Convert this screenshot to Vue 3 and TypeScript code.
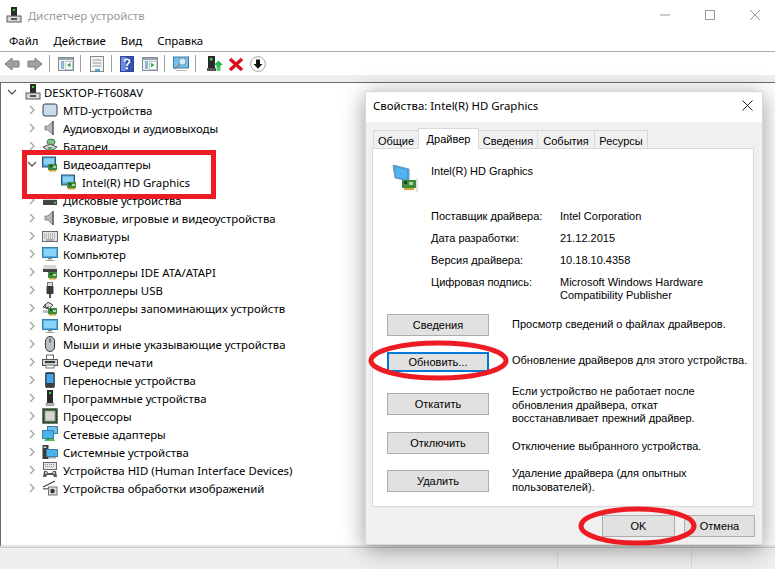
<script setup lang="ts">
interface Row { label: string; icon: string; level: number; open?: boolean }
const rows: Row[] = [
  { label: 'MTD-устройства', icon: 'mtd', level: 1 },
  { label: 'Аудиовходы и аудиовыходы', icon: 'speaker', level: 1 },
  { label: 'Батареи', icon: 'battery', level: 1 },
  { label: 'Видеоадаптеры', icon: 'video', level: 1, open: true },
  { label: 'Intel(R) HD Graphics', icon: 'video', level: 2 },
  { label: 'Дисковые устройства', icon: 'disk', level: 1 },
  { label: 'Звуковые, игровые и видеоустройства', icon: 'speaker', level: 1 },
  { label: 'Клавиатуры', icon: 'keyboard', level: 1 },
  { label: 'Компьютер', icon: 'monitor', level: 1 },
  { label: 'Контроллеры IDE ATA/ATAPI', icon: 'ide', level: 1 },
  { label: 'Контроллеры USB', icon: 'usb', level: 1 },
  { label: 'Контроллеры запоминающих устройств', icon: 'storage', level: 1 },
  { label: 'Мониторы', icon: 'monitor', level: 1 },
  { label: 'Мыши и иные указывающие устройства', icon: 'mouse', level: 1 },
  { label: 'Очереди печати', icon: 'printer', level: 1 },
  { label: 'Переносные устройства', icon: 'portable', level: 1 },
  { label: 'Программные устройства', icon: 'tower', level: 1 },
  { label: 'Процессоры', icon: 'cpu', level: 1 },
  { label: 'Сетевые адаптеры', icon: 'network', level: 1 },
  { label: 'Системные устройства', icon: 'system', level: 1 },
  { label: 'Устройства HID (Human Interface Devices)', icon: 'hid', level: 1 },
  { label: 'Устройства обработки изображений', icon: 'camera', level: 1 },
]
const menu = ['Файл', 'Действие', 'Вид', 'Справка']
const tabs = [
  { t: 'Общие', w: 45 },
  { t: 'Драйвер', w: 60 },
  { t: 'Сведения', w: 59 },
  { t: 'События', w: 57 },
  { t: 'Ресурсы', w: 53 },
]
const info = [
  { k: 'Поставщик драйвера:', v: ['Intel Corporation'] },
  { k: 'Дата разработки:', v: ['21.12.2015'] },
  { k: 'Версия драйвера:', v: ['10.18.10.4358'] },
  { k: 'Цифровая подпись:', v: ['Microsoft Windows Hardware', 'Compatibility Publisher'] },
]
const actions = [
  { b: 'Сведения', d: ['Просмотр сведений о файлах драйверов.'], cls: 'a1' },
  { b: 'Обновить...', d: ['Обновление драйверов для этого устройства.'], cls: 'a2' },
  { b: 'Откатить', d: ['Если устройство не работает после', 'обновления драйвера, откат', 'восстанавливает прежний драйвер.'], cls: 'a3' },
  { b: 'Отключить', d: ['Отключение выбранного устройства.'], cls: 'a4' },
  { b: 'Удалить', d: ['Удаление драйвера (для опытных', 'пользователей).'], cls: 'a5' },
]
</script>

<template>
  <div class="app">
    <svg class="defs" width="0" height="0" aria-hidden="true">
      <defs>
        <symbol id="i-host" viewBox="0 0 16 16">
          <rect x="5" y="0" width="6" height="9" fill="#2b2b2b"/><rect x="7" y="2" width="2" height="2" fill="#3fd04a"/>
          <rect x="1" y="9" width="14" height="6" fill="#d8d8d8" stroke="#5a5a5a"/><rect x="5" y="11" width="6" height="2" fill="#555"/>
        </symbol>
        <symbol id="i-mtd" viewBox="0 0 16 16">
          <rect x="1" y="2" width="14" height="12" rx="2" fill="#c8dcec" stroke="#3a3f45"/>
        </symbol>
        <symbol id="i-speaker" viewBox="0 0 16 16">
          <path d="M3 6h3l5-5v14l-5-5H3z" fill="#b8b8b8" stroke="#8a8a8a"/><path d="M11 1v14" stroke="#5e5e5e" stroke-width="1.4"/>
        </symbol>
        <symbol id="i-battery" viewBox="0 0 16 16">
          <ellipse cx="9" cy="4" rx="4" ry="3" fill="#7fc48a" stroke="#3e7d4a"/><path d="M1 9l7-3 7 3-7 5z" fill="#cfcfcf" stroke="#555"/><rect x="6" y="9" width="4" height="3" fill="#6aa56c"/>
        </symbol>
        <symbol id="i-video" viewBox="0 0 16 16">
          <rect x="0.5" y="1" width="13" height="10" fill="#4aa6e0" stroke="#33566e"/><rect x="2" y="2.5" width="10" height="6" fill="#8fd0f4"/>
          <rect x="6" y="8" width="9" height="6" fill="#3f8a3f"/><rect x="8" y="9" width="2" height="2" fill="#1d4a1d"/><rect x="11" y="10" width="3" height="2" fill="#a8d8a0"/><rect x="7" y="14" width="7" height="1.5" fill="#d8a030"/>
        </symbol>
        <symbol id="i-disk" viewBox="0 0 16 16">
          <path d="M2 4h12l1 4H1z" fill="#d6d6d6"/><rect x="1" y="8" width="14" height="5" fill="#444"/><rect x="12" y="10" width="2" height="1.5" fill="#5fd05f"/>
        </symbol>
        <symbol id="i-keyboard" viewBox="0 0 16 16">
          <rect x="0.5" y="3.5" width="15" height="10" fill="#e6e6e6" stroke="#6a6a6a"/>
          <path d="M2 6h12M2 8h12M2 10h12" stroke="#8a8a8a" stroke-dasharray="1 1"/><path d="M4 12h8" stroke="#7a7a7a"/>
        </symbol>
        <symbol id="i-monitor" viewBox="0 0 16 16">
          <rect x="0.5" y="1.5" width="15" height="10" fill="#49b4ee" stroke="#3d7ea6"/><rect x="2" y="3" width="12" height="7" fill="#8bd4f8"/>
          <path d="M6 12h4v1.5H6z" fill="#8a8a8a"/><path d="M3.5 14h9v1h-9z" fill="#a8a8a8"/>
        </symbol>
        <symbol id="i-ide" viewBox="0 0 16 16">
          <path d="M2 1h12l1 4H1z" fill="#d6d6d6"/><rect x="1" y="5" width="14" height="3" fill="#444"/>
          <rect x="6" y="8" width="9" height="6" fill="#3f8a3f"/><rect x="8" y="9" width="2" height="2" fill="#1d4a1d"/><rect x="11" y="10" width="3" height="2" fill="#a8d8a0"/><rect x="7" y="14" width="7" height="1.5" fill="#d8a030"/>
        </symbol>
        <symbol id="i-usb" viewBox="0 0 16 16">
          <rect x="5.5" y="0.5" width="5" height="4" fill="#ddd" stroke="#777"/><rect x="4.5" y="4" width="7" height="8" rx="1" fill="#3a3a3a"/><rect x="7" y="12" width="2" height="4" fill="#555"/>
        </symbol>
        <symbol id="i-storage" viewBox="0 0 16 16">
          <path d="M1 7l5-5 5 3-4 4z" fill="#d8d8d8" stroke="#444"/><path d="M3 4l1 4 3-1" fill="none" stroke="#444"/>
          <rect x="6" y="8" width="9" height="6" fill="#3f8a3f"/><rect x="8" y="9" width="2" height="2" fill="#1d4a1d"/><rect x="11" y="10" width="3" height="2" fill="#a8d8a0"/><rect x="1" y="10" width="5" height="3" fill="#bdbdbd"/><rect x="7" y="14" width="7" height="1.5" fill="#d8a030"/>
        </symbol>
        <symbol id="i-mouse" viewBox="0 0 16 16">
          <rect x="3.5" y="0.5" width="9" height="15" rx="4.5" fill="#b9c0c8" stroke="#34383c"/><rect x="7.2" y="2.5" width="1.6" height="4" fill="#5a6066"/>
        </symbol>
        <symbol id="i-printer" viewBox="0 0 16 16">
          <rect x="4.5" y="1" width="7" height="5" fill="#fff" stroke="#666"/><rect x="0.5" y="5.5" width="15" height="6" fill="#d0d0d0" stroke="#555"/>
          <rect x="3" y="7" width="10" height="2" fill="#3a3a3a"/><rect x="4" y="11" width="8" height="3" fill="#fff" stroke="#777"/>
        </symbol>
        <symbol id="i-portable" viewBox="0 0 16 16">
          <rect x="3.5" y="0.5" width="9" height="15" rx="1" fill="#3a3f45" stroke="#555"/><rect x="4.5" y="2" width="7" height="9" fill="#3ea6ee"/>
        </symbol>
        <symbol id="i-tower" viewBox="0 0 16 16">
          <rect x="5" y="0" width="6" height="13" fill="#2a2a2a"/><rect x="7" y="2" width="2" height="2" fill="#3fd04a"/><rect x="4" y="13" width="8" height="2.5" fill="#bcbcbc" stroke="#666" stroke-width=".5"/>
        </symbol>
        <symbol id="i-cpu" viewBox="0 0 16 16">
          <rect x="0.5" y="0.5" width="15" height="15" fill="#2c4a2c" stroke="#46703c" stroke-dasharray="1 .6"/><rect x="3" y="3" width="10" height="10" fill="#d8d8d2" stroke="#9a9a92"/>
        </symbol>
        <symbol id="i-network" viewBox="0 0 16 16">
          <rect x="5.5" y="0.5" width="10" height="7" fill="#6ec0ee" stroke="#3d7ea6"/><rect x="0.5" y="4.5" width="11" height="8" fill="#49b4ee" stroke="#3d7ea6"/>
          <path d="M3 13h9l1 2H2z" fill="#4cc060"/><rect x="5" y="12" width="2" height="2" fill="#2a8a3a"/>
        </symbol>
        <symbol id="i-system" viewBox="0 0 16 16">
          <rect x="0.5" y="1" width="6" height="14" fill="#3a3a3a"/><rect x="1.5" y="2.5" width="3" height="1.5" fill="#ccc"/>
          <rect x="4.5" y="5.5" width="11" height="7" fill="#49b4ee" stroke="#3d7ea6"/><rect x="7" y="13" width="7" height="1.5" fill="#aaa"/>
        </symbol>
        <symbol id="i-hid" viewBox="0 0 16 16">
          <rect x="1.5" y="0.5" width="13" height="7" fill="#e6e6e6" stroke="#6a6a6a"/><path d="M3 2.5h10M3 4.5h10" stroke="#8a8a8a" stroke-dasharray="1 1"/>
          <path d="M1 15l1-6h3l1 2h4l1-2h3l1 6h-3l-1-2H5l-1 2z" fill="#555"/><circle cx="4" cy="11" r="1" fill="#dde"/><circle cx="12" cy="11" r="1" fill="#dde"/>
        </symbol>
        <symbol id="i-camera" viewBox="0 0 16 16">
          <path d="M1 7L13 1" stroke="#444" stroke-width="1.2"/><rect x="1" y="8" width="6" height="1.5" fill="#777"/><rect x="6.5" y="7" width="8.5" height="8" fill="#d8d8d8" stroke="#777"/>
          <circle cx="10.5" cy="11" r="2.2" fill="#333"/>
        </symbol>
        <symbol id="i-arrow" viewBox="0 0 16 16">
          <path d="M8 2L1 8l7 6v-3h7V5H8z" fill="#a0a0a0" stroke="#7c7c7c"/>
        </symbol>
        <symbol id="i-win" viewBox="0 0 16 16">
          <rect x="0.5" y="1.5" width="15" height="13" fill="#eef3f6" stroke="#7d8c96"/><rect x="1" y="2" width="14" height="2" fill="#9aa5ad"/>
          <path d="M3 6h3M3 8h3M3 10h3M3 12h3" stroke="#3a78b0"/><rect x="7.5" y="5.5" width="7" height="8" fill="#fff" stroke="#c0c8cc"/>
        </symbol>
      </defs>
    </svg>

    <header class="titlebar">
      <svg class="ti"><use href="#i-host"/></svg>
      <span class="title">Диспетчер устройств</span>
      <div class="wbtns">
        <svg width="10" height="10" viewBox="0 0 10 10"><path d="M0 5h10" stroke="#9a9a9a"/></svg>
        <svg width="10" height="10" viewBox="0 0 10 10"><rect x=".5" y=".5" width="9" height="9" fill="none" stroke="#9a9a9a"/></svg>
        <svg width="10" height="10" viewBox="0 0 10 10"><path d="M0 0l10 10M10 0L0 10" stroke="#9a9a9a"/></svg>
      </div>
    </header>

    <nav class="menu"><span v-for="m in menu" :key="m">{{ m }}</span></nav>

    <div class="toolbar">
      <svg class="tb w16"><use href="#i-arrow"/></svg>
      <svg class="tb w16 flip"><use href="#i-arrow"/></svg>
      <i class="sep"></i>
      <svg class="tb" viewBox="0 0 16 16">
        <use href="#i-win"/><path d="M12.5 6.5v5L9 9z" fill="#3eb04a"/>
      </svg>
      <i class="sep"></i>
      <svg class="tb" viewBox="0 0 16 16">
        <rect x="1.5" y="0.5" width="13" height="15" fill="#f4f4f4" stroke="#888"/><path d="M3.5 4h9M3.5 7h9M3.5 10h9" stroke="#9a9a9a"/><rect x="6" y="13" width="5" height="2" fill="#3ea6ee"/>
      </svg>
      <i class="sep"></i>
      <svg class="tb help" viewBox="0 0 14 16">
        <rect x="0" y="0" width="14" height="16" fill="#3450b0" stroke="#24388a"/><rect x="1" y="1" width="5" height="14" fill="#6f88dd"/>
        <path d="M4.5 5.5C4.5 2.5 9.5 2.5 9.5 5.5 9.5 7.5 7 7.5 7 10" fill="none" stroke="#fff" stroke-width="1.7"/><rect x="6" y="11.3" width="2" height="2" fill="#fff"/>
      </svg>
      <svg class="tb" viewBox="0 0 16 16">
        <use href="#i-win"/><path d="M9 6.5v5l3.5-2.5z" fill="#3eb04a"/>
      </svg>
      <i class="sep"></i>
      <svg class="tb" viewBox="0 0 16 16">
        <rect x="0.5" y="1" width="15" height="11" fill="#6ec0ee" stroke="#3d7ea6"/><circle cx="9.5" cy="5.5" r="3.6" fill="#cfe9f8" stroke="#7d97a8"/><path d="M7 8l-5 5" stroke="#8a8a8a" stroke-width="1.6"/><path d="M3 14.5h11" stroke="#bbb"/>
      </svg>
      <i class="sep"></i>
      <svg class="tb scan" viewBox="0 0 16 16">
        <rect x="1" y="0" width="7" height="12" fill="#2a2a2a"/><rect x="3" y="2" width="2.5" height="2.5" fill="#3fd04a"/><rect x="0" y="12" width="9" height="3" fill="#555"/>
        <path d="M11.5 4.5L16 9h-2.5v2h-4V9H7z" fill="#22b84a"/><path d="M9.5 12h4M9.5 14h4" stroke="#22b84a" stroke-width="1.3"/>
      </svg>
      <svg class="tb" viewBox="0 0 16 16">
        <path d="M2 3l12 11M14 3L2 14" stroke="#d8101c" stroke-width="3.4"/>
      </svg>
      <svg class="tb down" viewBox="0 0 16 16">
        <circle cx="8" cy="8" r="7.4" fill="#fff" stroke="#a4a4a4"/><path d="M6 3.5h4V8h2.5L8 12.8 3.5 8H6z" fill="#111"/>
      </svg>
    </div>
    <div class="band"></div>

    <main class="tree">
      <div class="row root">
        <svg class="chev" viewBox="0 0 10 10"><path d="M1 3l4 4 4-4" fill="none" stroke="#555" stroke-width="1.3"/></svg>
        <svg class="ico"><use href="#i-host"/></svg>
        <span class="lbl">DESKTOP-FT608AV</span>
      </div>
      <div v-for="r in rows" :key="r.label" class="row" :class="r.level === 2 ? 'child' : 'item'">
        <svg v-if="r.level === 1" class="chev" viewBox="0 0 10 10">
          <path v-if="r.open" d="M1 3l4 4 4-4" fill="none" stroke="#555" stroke-width="1.3"/>
          <path v-else d="M3 1l4 4-4 4" fill="none" stroke="#a6a6a6" stroke-width="1.4"/>
        </svg>
        <svg class="ico"><use :href="'#i-' + r.icon"/></svg>
        <span class="lbl">{{ r.label }}</span>
      </div>
    </main>

    <footer class="status"><i></i><i></i><i></i></footer>

    <section class="dialog">
      <div class="dtitle">
        <span>Свойства: Intel(R) HD Graphics</span>
        <svg width="11" height="11" viewBox="0 0 11 11"><path d="M.5.5l10 10M10.5.5l-10 10" stroke="#222"/></svg>
      </div>
      <div class="dbody">
        <div class="tabs">
          <span v-for="t in tabs" :key="t.t" class="tab" :class="{ on: t.t === 'Драйвер' }" :style="{ width: t.w + 1 + 'px' }">{{ t.t }}</span>
        </div>
        <div class="panel">
          <div class="head">
            <svg class="bigico" viewBox="0 0 26 30">
              <path d="M1 2l16 4v12L3 15z" fill="#3c9ee0" stroke="#7b9db2"/><path d="M3 4l12 3v9L4 14z" fill="#52b4f0"/>
              <rect x="10" y="17" width="14" height="8" fill="#3f8a3f"/><rect x="12" y="18" width="3" height="3" fill="#1d4a1d"/><rect x="17" y="19" width="4" height="3" fill="#a8d8a0"/><rect x="12" y="25" width="10" height="2" fill="#d8a030"/><path d="M25 15v14" stroke="#c8c8c8"/>
            </svg>
            <span>Intel(R) HD Graphics</span>
          </div>
          <dl class="info">
            <template v-for="i in info" :key="i.k">
              <dt>{{ i.k }}</dt>
              <dd><div v-for="l in i.v" :key="l">{{ l }}</div></dd>
            </template>
          </dl>
          <div class="actions">
            <div v-for="a in actions" :key="a.b" class="act" :class="a.cls">
              <button class="btn">{{ a.b }}</button>
              <p><span v-for="l in a.d" :key="l">{{ l }}</span></p>
            </div>
          </div>
        </div>
        <div class="foot">
          <button class="btn ok">OK</button>
          <button class="btn cancel">Отмена</button>
        </div>
      </div>
    </section>

    <svg class="marks" width="775" height="569" viewBox="0 0 775 569" aria-hidden="true">
      <rect x="24.5" y="152.5" width="189" height="44" fill="none" stroke="#ed1c24" stroke-width="5"/>
      <ellipse cx="438.5" cy="360.5" rx="67.5" ry="17.5" fill="none" stroke="#ed1c24" stroke-width="5"/>
      <ellipse cx="637.5" cy="526" rx="56.5" ry="17" fill="none" stroke="#ed1c24" stroke-width="5"/>
    </svg>
  </div>
</template>

<style>
html, body { margin: 0; background: #fff; overflow: hidden; }
</style>

<style scoped>
.app {
  position: relative; width: 775px; height: 569px; display: flex; flex-direction: column; overflow: hidden;
  font-family: "Noto Sans", "Open Sans", sans-serif; font-size: 11.4px; color: #000; background: #fff;
}
.defs { position: absolute; }
.titlebar { height: 30px; display: flex; align-items: center; flex: none; }
.ti { width: 16px; height: 16px; margin-left: 6px; }
.title { margin-left: 6px; color: #999; }
.wbtns { margin-left: auto; display: flex; gap: 35px; padding-right: 15px; align-items: center; }
.menu { height: 21px; flex: none; display: flex; align-items: center; padding-left: 9px; gap: 15px; border-bottom: 1px solid #adadad; }
.toolbar { height: 23px; flex: none; display: flex; align-items: center; padding-left: 4px; }
.tb { width: 16px; height: 16px; flex: none; margin-right: 5px; }
.w16 { margin-right: 7px; }
.flip { transform: scaleX(-1); margin-right: 5px; }
.help { width: 14px; margin-right: 8px; }
.scan { margin-left: 3px; }
.down { margin-left: 1px; }
.sep { width: 1px; height: 17px; background: #a0a0a0; flex: none; margin: 0 8px 0 1px; }
.band { height: 7px; flex: none; background: #eeeeee; }
.tree { flex: 1; border-top: 1px solid #6b6b6b; border-left: 1px solid #6b6b6b; border-bottom: 2px solid #e4e4e4; min-height: 0; }
.row { height: 18px; display: flex; align-items: center; white-space: nowrap; }
.chev { width: 10px; height: 10px; flex: none; }
.ico { width: 16px; height: 16px; flex: none; }
.root { padding-left: 6px; }
.root .ico { margin-left: 8px; }
.root .lbl { margin-left: 3px; }
.item { padding-left: 26px; }
.item .ico { margin-left: 5px; }
.item .lbl { margin-left: 5px; }
.child { padding-left: 60px; }
.child .lbl { margin-left: 5px; }
.status { height: 21px; flex: none; background: #efefef; display: flex; border-top: 1px solid #cccccc; }
.status i { border-right: 1px solid #dadada; width: 133px; margin-top: 2px; }
.status i:first-child { width: 557px; }
.status i:last-child { border: 0; flex: 1; }

.dialog {
  position: absolute; left: 365px; top: 91px; width: 398px; height: 454px;
  display: flex; flex-direction: column; background: #f0f0f0; border: 1px solid #d8d8d8; box-sizing: border-box;
  box-shadow: 0 4px 22px rgba(0, 0, 0, .4);
}
.dtitle { height: 30px; background: #fff; flex: none; display: flex; align-items: center; justify-content: space-between; padding: 0 9px 3px 7px; box-sizing: border-box; }
.dbody { flex: 1; padding: 6px 7px 0 6px; display: flex; flex-direction: column; font-family: "Liberation Sans", Arial, sans-serif; font-size: 11px; }
.tabs { display: flex; height: 20px; flex: none; padding-left: 1px; align-items: flex-end; }
.tab { height: 18px; line-height: 20px; text-align: center; background: #f0f0f0; border: 1px solid #d9d9d9; border-bottom: 0; margin-right: -1px; box-sizing: border-box; flex: none; }
.tab.on { height: 21px; line-height: 20px; background: #fff; position: relative; z-index: 1; margin-bottom: -1px; }
.panel { height: 359px; flex: none; background: #fff; border: 1px solid #d9d9d9; box-sizing: border-box; margin-right: 1px; }
.head { display: flex; align-items: flex-start; padding: 14px 0 0 19px; height: 55px; box-sizing: border-box; }
.bigico { width: 26px; height: 30px; flex: none; }
.head span { margin: 2px 0 0 13px; }
.info { display: grid; grid-template-columns: 129px 1fr; margin: 0 0 0 58px; }
.info dt { height: 22px; line-height: 13px; padding-top: 6px; box-sizing: border-box; }
.info dd { margin: 0; line-height: 13px; padding-top: 6px; min-height: 22px; box-sizing: border-box; }
.actions { margin-left: 14px; margin-top: 12px; }
.act { display: flex; align-items: flex-start; }
.act p { margin: 0 0 0 23px; display: flex; flex-direction: column; line-height: 13.5px; white-space: nowrap; }
.btn { width: 102px; height: 22px; padding: 0; background: #e1e1e1; border: 1px solid #adadad; font: inherit; color: #000; flex: none; box-sizing: border-box; }
.a1 { height: 38px; }
.a1 p { margin-top: 4px; }
.a2 { height: 41px; }
.a2 p { margin-top: 2px; }
.a2 .btn { height: 20px; border: 2px solid #0078d7; }
.a3 { height: 39px; }
.a3 p { margin-top: -8px; }
.a4 { height: 38px; }
.a4 p { margin-top: 8px; }
.a5 { height: 22px; }
.a5 p { margin-top: -3px; }
.foot { display: flex; justify-content: flex-end; gap: 9px; padding-top: 8px; }
.ok { width: 73px; }
.cancel { width: 71px; }
.marks { position: absolute; left: 0; top: 0; pointer-events: none; }
</style>
